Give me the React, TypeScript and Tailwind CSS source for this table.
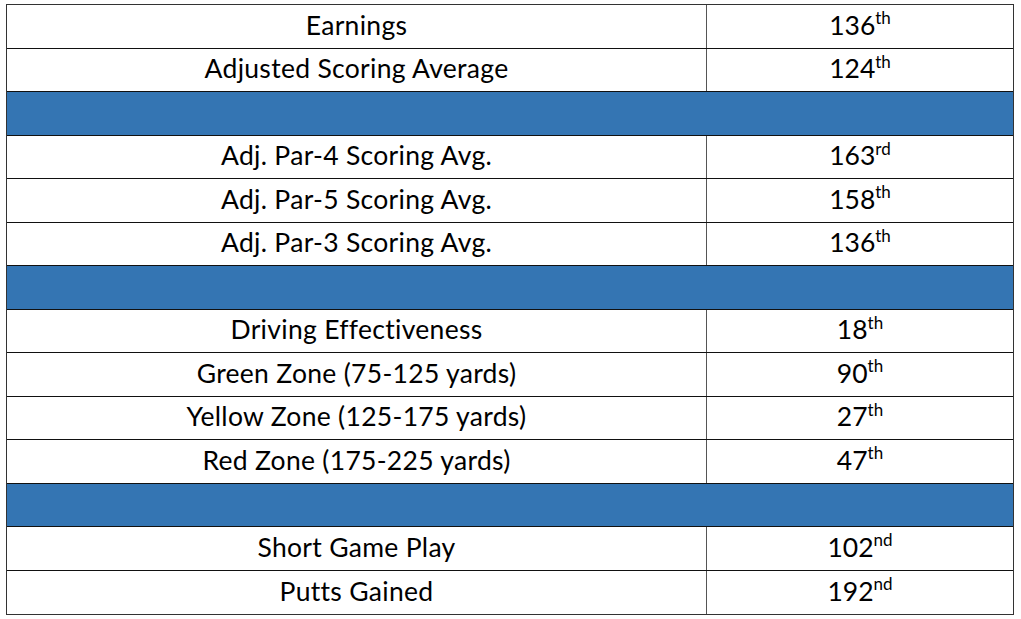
const rows: ({ label: string; rank: string; suffix: string } | null)[] = [
  { label: "Earnings", rank: "136", suffix: "th" },
  { label: "Adjusted Scoring Average", rank: "124", suffix: "th" },
  null,
  { label: "Adj. Par-4 Scoring Avg.", rank: "163", suffix: "rd" },
  { label: "Adj. Par-5 Scoring Avg.", rank: "158", suffix: "th" },
  { label: "Adj. Par-3 Scoring Avg.", rank: "136", suffix: "th" },
  null,
  { label: "Driving Effectiveness", rank: "18", suffix: "th" },
  { label: "Green Zone (75-125 yards)", rank: "90", suffix: "th" },
  { label: "Yellow Zone (125-175 yards)", rank: "27", suffix: "th" },
  { label: "Red Zone (175-225 yards)", rank: "47", suffix: "th" },
  null,
  { label: "Short Game Play", rank: "102", suffix: "nd" },
  { label: "Putts Gained", rank: "192", suffix: "nd" },
];

export default function App() {
  return (
    <div className="h-[619px] w-[1021px] bg-white pl-[6px] pt-[4px]">
      <div
        className="flex w-[1008px] flex-col border-[1.5px] border-[#333] text-[26.5px] text-black"
        style={{ fontFamily: "Lato, 'Noto Sans', sans-serif" }}
      >
        {rows.map((row, i) => {
          const last = i === rows.length - 1;
          if (!row) {
            return (
              <div
                key={i}
                className="h-[43.5px] border-b-[1.5px] border-[#111] bg-[#3475b3]"
              />
            );
          }
          return (
            <div
              key={i}
              className={`flex h-[43.5px] ${last ? "" : "border-b-[1.5px] border-[#111]"}`}
            >
              <div className="flex w-[700px] items-center justify-center border-r-[1.5px] border-[#555] pb-[1px] tracking-[0.3px]">
                {row.label}
              </div>
              <div className="flex flex-1 items-center justify-center pb-[1px]">
                <span>
                  {row.rank}
                  <sup className="top-[-0.62em] text-[17px]">{row.suffix}</sup>
                </span>
              </div>
            </div>
          );
        })}
      </div>
    </div>
  );
}
